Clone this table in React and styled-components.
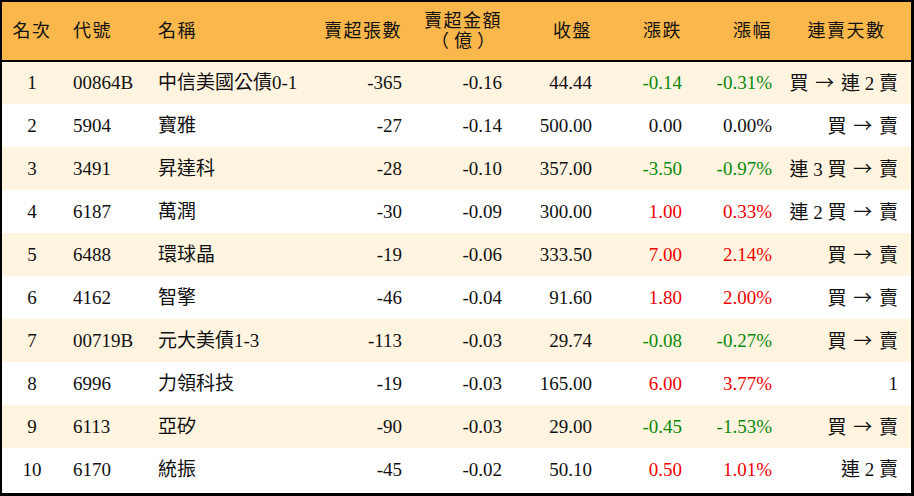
import React from 'react';
import styled, { createGlobalStyle } from 'styled-components';

const GlobalStyle = createGlobalStyle`
  html, body {
    margin: 0;
    padding: 0;
    background: #ffffff;
  }
  body {
    font-family: "Liberation Serif", "Noto Sans CJK TC", serif;
    color: #111;
  }
  #root {
    width: 914px;
    height: 496px;
  }
`;

const Frame = styled.div`
  box-sizing: border-box;
  width: 914px;
  height: 496px;
  border-top: 2px solid #000;
  border-left: 2px solid #000;
  border-right: 3px solid #000;
  border-bottom: 3px solid #000;
  overflow: hidden;
`;

const Table = styled.table`
  width: 100%;
  border-collapse: collapse;
  table-layout: fixed;
  font-size: 19px;
`;

const HeadRow = styled.tr`
  background: #f9b74c;
  height: 59px;
  border-bottom: 2px solid #000;
`;

const Th = styled.th`
  font-weight: normal;
  font-size: 18px;
  letter-spacing: 1.5px;
  padding: 0 ${(p) => p.$pr ?? 10}px 0 ${(p) => p.$pl ?? 0}px;
  text-align: ${(p) => p.$align || 'right'};
  line-height: 22px;
  vertical-align: middle;
  white-space: nowrap;
`;

const Stack = styled.span`
  display: inline-block;
  text-align: center;
  line-height: 20px;
`;

const Unit = styled.span`
  display: inline-block;
  letter-spacing: 5px;
  margin-left: 5px;
`;

const Row = styled.tr`
  height: 43px;
  background: ${(p) => (p.$odd ? '#fff4df' : '#ffffff')};
`;

const Td = styled.td`
  padding: 0 ${(p) => p.$pr ?? 10}px 0 ${(p) => p.$pl ?? 0}px;
  text-align: ${(p) => p.$align || 'right'};
  color: ${(p) => p.$color || '#111'};
  white-space: nowrap;
  vertical-align: middle;
  line-height: 22px;
`;

const Arrow = styled.span`
  font-family: "Noto Sans CJK TC", sans-serif;
  font-size: 19px;
  margin: 0 2px;
`;

const rows = [
  ['1', '00864B', '中信美國公債0-1', '-365', '-0.16', '44.44', '-0.14', '-0.31%', '買 → 連 2 賣'],
  ['2', '5904', '寶雅', '-27', '-0.14', '500.00', '0.00', '0.00%', '買 → 賣'],
  ['3', '3491', '昇達科', '-28', '-0.10', '357.00', '-3.50', '-0.97%', '連 3 買 → 賣'],
  ['4', '6187', '萬潤', '-30', '-0.09', '300.00', '1.00', '0.33%', '連 2 買 → 賣'],
  ['5', '6488', '環球晶', '-19', '-0.06', '333.50', '7.00', '2.14%', '買 → 賣'],
  ['6', '4162', '智擎', '-46', '-0.04', '91.60', '1.80', '2.00%', '買 → 賣'],
  ['7', '00719B', '元大美債1-3', '-113', '-0.03', '29.74', '-0.08', '-0.27%', '買 → 賣'],
  ['8', '6996', '力領科技', '-19', '-0.03', '165.00', '6.00', '3.77%', '1'],
  ['9', '6113', '亞矽', '-90', '-0.03', '29.00', '-0.45', '-1.53%', '買 → 賣'],
  ['10', '6170', '統振', '-45', '-0.02', '50.10', '0.50', '1.01%', '連 2 賣'],
];

const changeColor = (v) => {
  const n = parseFloat(v);
  if (n > 0) return '#f00000';
  if (n < 0) return '#0a8a0a';
  return '#111';
};

const Streak = ({ text }) => {
  const parts = text.split('→');
  if (parts.length === 1) return text;
  return (
    <>
      {parts[0]}
      <Arrow>→</Arrow>
      {parts[1]}
    </>
  );
};

export default function App() {
  return (
    <>
      <GlobalStyle />
      <Frame>
        <Table>
          <colgroup>
            <col style={{ width: 60 }} />
            <col style={{ width: 85 }} />
            <col style={{ width: 170 }} />
            <col style={{ width: 95 }} />
            <col style={{ width: 100 }} />
            <col style={{ width: 90 }} />
            <col style={{ width: 90 }} />
            <col style={{ width: 90 }} />
            <col />
          </colgroup>
          <thead>
            <HeadRow>
              <Th $align="center" $pr={0}>名次</Th>
              <Th $align="left" $pl={11}>代號</Th>
              <Th $align="left" $pl={11}>名稱</Th>
              <Th>賣超張數</Th>
              <Th>
                <Stack>
                  賣超金額
                  <br />
                  <Unit>（億）</Unit>
                </Stack>
              </Th>
              <Th>收盤</Th>
              <Th>漲跌</Th>
              <Th>漲幅</Th>
              <Th $align="center" $pr={0}>連賣天數</Th>
            </HeadRow>
          </thead>
          <tbody>
            {rows.map((r, i) => (
              <Row key={r[0]} $odd={i % 2 === 0}>
                <Td $align="center" $pr={0}>{r[0]}</Td>
                <Td $align="left" $pl={11}>{r[1]}</Td>
                <Td $align="left" $pl={11}>{r[2]}</Td>
                <Td>{r[3]}</Td>
                <Td>{r[4]}</Td>
                <Td>{r[5]}</Td>
                <Td $color={changeColor(r[6])}>{r[6]}</Td>
                <Td $color={changeColor(r[7])}>{r[7]}</Td>
                <Td $pr={13}>
                  <Streak text={r[8]} />
                </Td>
              </Row>
            ))}
          </tbody>
        </Table>
      </Frame>
    </>
  );
}
